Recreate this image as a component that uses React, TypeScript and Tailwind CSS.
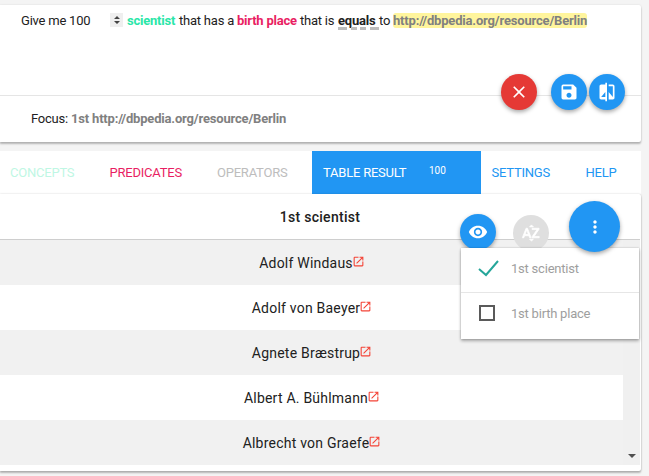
import React from "react";
import {
  MdClose,
  MdSave,
  MdCompare,
  MdVisibility,
  MdMoreVert,
  MdOpenInNew,
} from "react-icons/md";

const people = [
  "Adolf Windaus",
  "Adolf von Baeyer",
  "Agnete Bræstrup",
  "Albert A. Bühlmann",
  "Albrecht von Graefe",
];

const round =
  "flex items-center justify-center rounded-full text-white shadow-[0_2px_4px_rgba(0,0,0,0.35)]";

function Query() {
  return (
    <div className="flex h-[90px] items-start pt-1.5 pl-[21px] leading-[19px] whitespace-nowrap">
      <span className="w-[89px]">Give me 100</span>
      <span className="mt-[2px] mr-1 flex h-[14px] w-[13px] flex-col items-center justify-center gap-[2px] bg-[#efefef]">
        <svg width="6" height="8" viewBox="0 0 6 8" fill="#444">
          <path d="M3 0L6 3H0zM3 8L0 5h6z" />
        </svg>
      </span>
      <b className="w-[52px] text-[#2ae6a8]">scientist</b>
      <span className="w-[58px]">that has a</span>
      <b className="w-[63px] text-[#e91e63]">birth place</b>
      <span className="w-[38px]">that is</span>
      <b className="relative w-[41px]">
        equals
        <span className="absolute top-[16px] left-0 flex h-[3px] w-[41px] justify-between">
          <i className="w-[9px] bg-[#bdbdbd]" />
          <i className="w-[6px] bg-[#bdbdbd]" />
          <i className="w-[6px] bg-[#bdbdbd]" />
          <i className="w-[9px] bg-[#bdbdbd]" />
        </span>
      </b>
      <span className="w-[14px]">to</span>
      <b className="mt-[2px] h-[15px] rounded-[3px] bg-[#fff59d] leading-[15px] tracking-[-0.18px] text-[#808080]">
        http://dbpedia.org/resource/Berlin
      </b>
    </div>
  );
}

function Tabs() {
  return (
    <nav className="mt-[9px] flex h-[43px] w-[641px] bg-white text-[13px] leading-[43px] whitespace-nowrap">
      <span className="w-[99px] pl-[10px] text-[#bff7e4]">CONCEPTS</span>
      <span className="w-[108px] pl-[10.5px] text-[#e91e63]">PREDICATES</span>
      <span className="w-[105px] pl-[10px] text-[#bdbdbd]">OPERATORS</span>
      <span className="flex w-[169px] bg-[#2196f3] pl-[11px] text-white">
        <span className="w-[106px]">TABLE RESULT</span>
        <span className="text-[10px] leading-[39px] tracking-normal">100</span>
      </span>
      <span className="w-[94px] pl-[10.5px] text-[#2196f3]">SETTINGS</span>
      <span className="pl-[10.5px] text-[#2196f3]">HELP</span>
    </nav>
  );
}

function SortIcon() {
  return (
    <svg width="20" height="20" viewBox="0 0 24 24" fill="currentColor" stroke="currentColor" strokeWidth="0.9">
      <path d="M14.94 4.66h-4.72l2.36-2.36zm-4.69 14.71h4.66l-2.33 2.33zM6.1 6.27L1.6 17.73h1.84l.92-2.45h5.11l.92 2.45h1.84L7.74 6.27H6.1zm-1.13 7.37l1.94-5.18 1.94 5.18H4.97zm10.76 2.5h6.12v1.59h-8.53v-1.29l5.92-8.56h-5.88v-1.6h8.3v1.26l-5.93 8.6z" />
    </svg>
  );
}

function ColumnMenu() {
  return (
    <div className="absolute top-[54px] left-[461px] w-[178px] bg-white text-[13px] text-[#9e9e9e] shadow-[0_2px_3px_rgba(0,0,0,0.3),0_0_2px_rgba(0,0,0,0.2)]">
      <div className="flex h-[45px] items-center border-b border-[#e6e6e6] pl-[17px]">
        <svg className="mr-3 -mt-1" width="21" height="18" viewBox="0 0 21 18" fill="none" stroke="#26a69a" strokeWidth="2">
          <path d="M1 10L8 16L20 2" />
        </svg>
        <span className="-mt-[3px]">1st scientist</span>
      </div>
      <div className="flex h-[46px] items-center pl-[18px]">
        <span className="-mt-[6px] mr-[16px] h-4 w-4 border-2 border-[#5a5a5a]" />
        <span className="-mt-1">1st birth place</span>
      </div>
    </div>
  );
}

export default function App() {
  return (
    <div className="h-[476px] w-[649px] overflow-hidden bg-[#f4f4f4] pt-[5px] font-['Roboto',sans-serif] text-[13px] tracking-[-0.22px] text-[#212121]">
      <section className="relative h-[137px] w-[641px] rounded-r-[2px] bg-white shadow-[0_2px_2px_rgba(0,0,0,0.25),0_0_2px_rgba(0,0,0,0.12)]">
        <Query />
        <div className="flex h-[47px] items-center gap-[3px] border-t border-[#e5e5e5] pl-[31px]">
          <span>Focus:</span>
          <b className="tracking-[-0.18px] text-[#808080]">1st http://dbpedia.org/resource/Berlin</b>
        </div>
        <div className="absolute top-[69px] left-[501px] flex">
          <button className={`${round} mr-[14px] h-9 w-9 bg-[#e53935]`}>
            <MdClose size={20} />
          </button>
          <button className={`${round} mr-[2px] h-9 w-9 bg-[#2196f3]`}>
            <MdSave size={20} />
          </button>
          <button className={`${round} h-9 w-9 bg-[#2196f3]`}>
            <MdCompare size={20} />
          </button>
        </div>
      </section>
      <Tabs />
      <section className="relative h-[277px] w-[641px] rounded-r-[2px] bg-white shadow-[0_2px_2px_rgba(0,0,0,0.25),0_0_2px_rgba(0,0,0,0.2)]">
        <div className="flex h-[46px] w-[640px] items-center justify-center border-b border-[#cecece] pt-[2px] text-[14px] font-medium tracking-[0.27px]">
          1st scientist
        </div>
        <div className="flex h-[225px] w-[640px] bg-[#f0f0f0]">
          <div className="w-[623px]">
            {people.map((name) => (
              <div key={name} className="flex h-[45px] items-center justify-center bg-[#f1f1f1] pl-px text-[14px] tracking-[0.22px] even:bg-white">
                <span className="pt-[2px]">{name}</span>
                <MdOpenInNew className="-mt-[2px] -ml-px text-[#f44336]" size={13} />
              </div>
            ))}
          </div>
          <div className="flex w-[17px] items-end justify-center pb-[7px]">
            <span className="border-x-[4px] border-t-[4px] border-x-transparent border-t-[#505050]" />
          </div>
        </div>
        <div className={`${round} absolute top-[20px] left-[460px] h-9 w-9 bg-[#2196f3]`}>
          <MdVisibility size={20} />
        </div>
        <div className="absolute top-[21px] left-[513px] flex h-9 w-9 items-center justify-center rounded-full bg-[#dfdfdf] text-white">
          <SortIcon />
        </div>
        <ColumnMenu />
        <div className={`${round} absolute top-[7px] left-[569px] h-[51px] w-[51px] bg-[#2196f3]`}>
          <MdMoreVert size={20} />
        </div>
      </section>
    </div>
  );
}
